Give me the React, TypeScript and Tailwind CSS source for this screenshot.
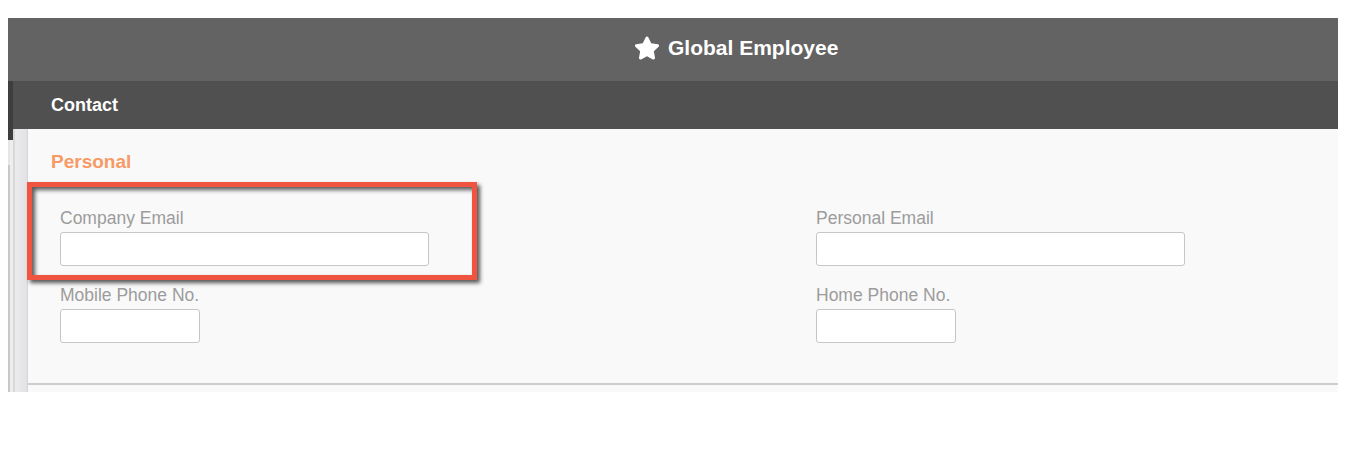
import { FaStar } from 'react-icons/fa'

interface FieldProps {
  label: string
  width: string
}

function Field({ label, width }: FieldProps) {
  return (
    <div className="flex flex-col">
      <label className="text-[17.5px] leading-[20px] text-[#9c9c9c]">{label}</label>
      <input
        type="text"
        className={`mt-[4px] h-[34px] ${width} rounded-[3px] border border-[#c6c6c6] bg-white outline-none`}
      />
    </div>
  )
}

export default function App() {
  return (
    <div className="h-[464px] w-[1361px] bg-white pt-[18px] pl-2 font-['Liberation_Sans',Arial,sans-serif]">
      <div className="w-[1330px]">
        {/* Title bar */}
        <div className="flex h-[63px] items-center bg-[#636363] pb-[4px] pl-[626px]">
          <FaStar className="h-[26px] w-[26px] text-white" />
          <span className="ml-[8px] text-[21px] font-bold text-white">Global Employee</span>
        </div>

        {/* Section tab */}
        <div className="flex h-[48px]">
          <div className="w-[5px] bg-[#3e3e3e]" />
          <div className="flex flex-1 items-center bg-[#505050] pl-[38px]">
            <span className="text-[18px] font-bold text-white">Contact</span>
          </div>
        </div>

        {/* Body */}
        <div className="flex h-[263px]">
          {/* left edge strip */}
          <div className="flex w-[20px]">
            <div className="flex w-[2px] flex-col">
              <div className="h-[11px] bg-[#3e3e3e]" />
              <div className="h-[25px] bg-[#e6e6e6]" />
              <div className="flex-1 bg-[#c8c8c8]" />
            </div>
            <div className="flex w-[3px] flex-col">
              <div className="h-[11px] bg-[#3e3e3e]" />
              <div className="flex-1 bg-[#eeeeee]" />
            </div>
            <div className="w-[2px] bg-[#d8d8d8]" />
            <div className="w-[12px] bg-gradient-to-r from-[#ececee] to-[#e2e2e4]" />
            <div className="w-[1px] bg-[#d6d6d6]" />
          </div>

          <div className="relative flex-1 bg-[#f9f9f9]">
            <div className="pl-[23px] pt-[21px] text-[19px] font-bold leading-[24px] text-[#f79a66]">
              Personal
            </div>

            <div className="mt-[34px] grid grid-cols-[756px_1fr] gap-y-[19px] pl-[32px]">
              <Field label="Company Email" width="w-[369px]" />
              <Field label="Personal Email" width="w-[369px]" />
              <Field label="Mobile Phone No." width="w-[140px]" />
              <Field label="Home Phone No." width="w-[140px]" />
            </div>

            <div className="mt-[40px] h-[2px] bg-[#cdcdcd]" />

            {/* highlight annotation */}
            <div className="absolute left-[-1px] top-[53px] h-[98px] w-[450px] border-[5px] border-[#f0533f] shadow-[3px_3px_4px_rgba(0,0,0,0.65),inset_3px_3px_4px_rgba(0,0,0,0.65)]" />
          </div>
        </div>
      </div>
    </div>
  )
}
